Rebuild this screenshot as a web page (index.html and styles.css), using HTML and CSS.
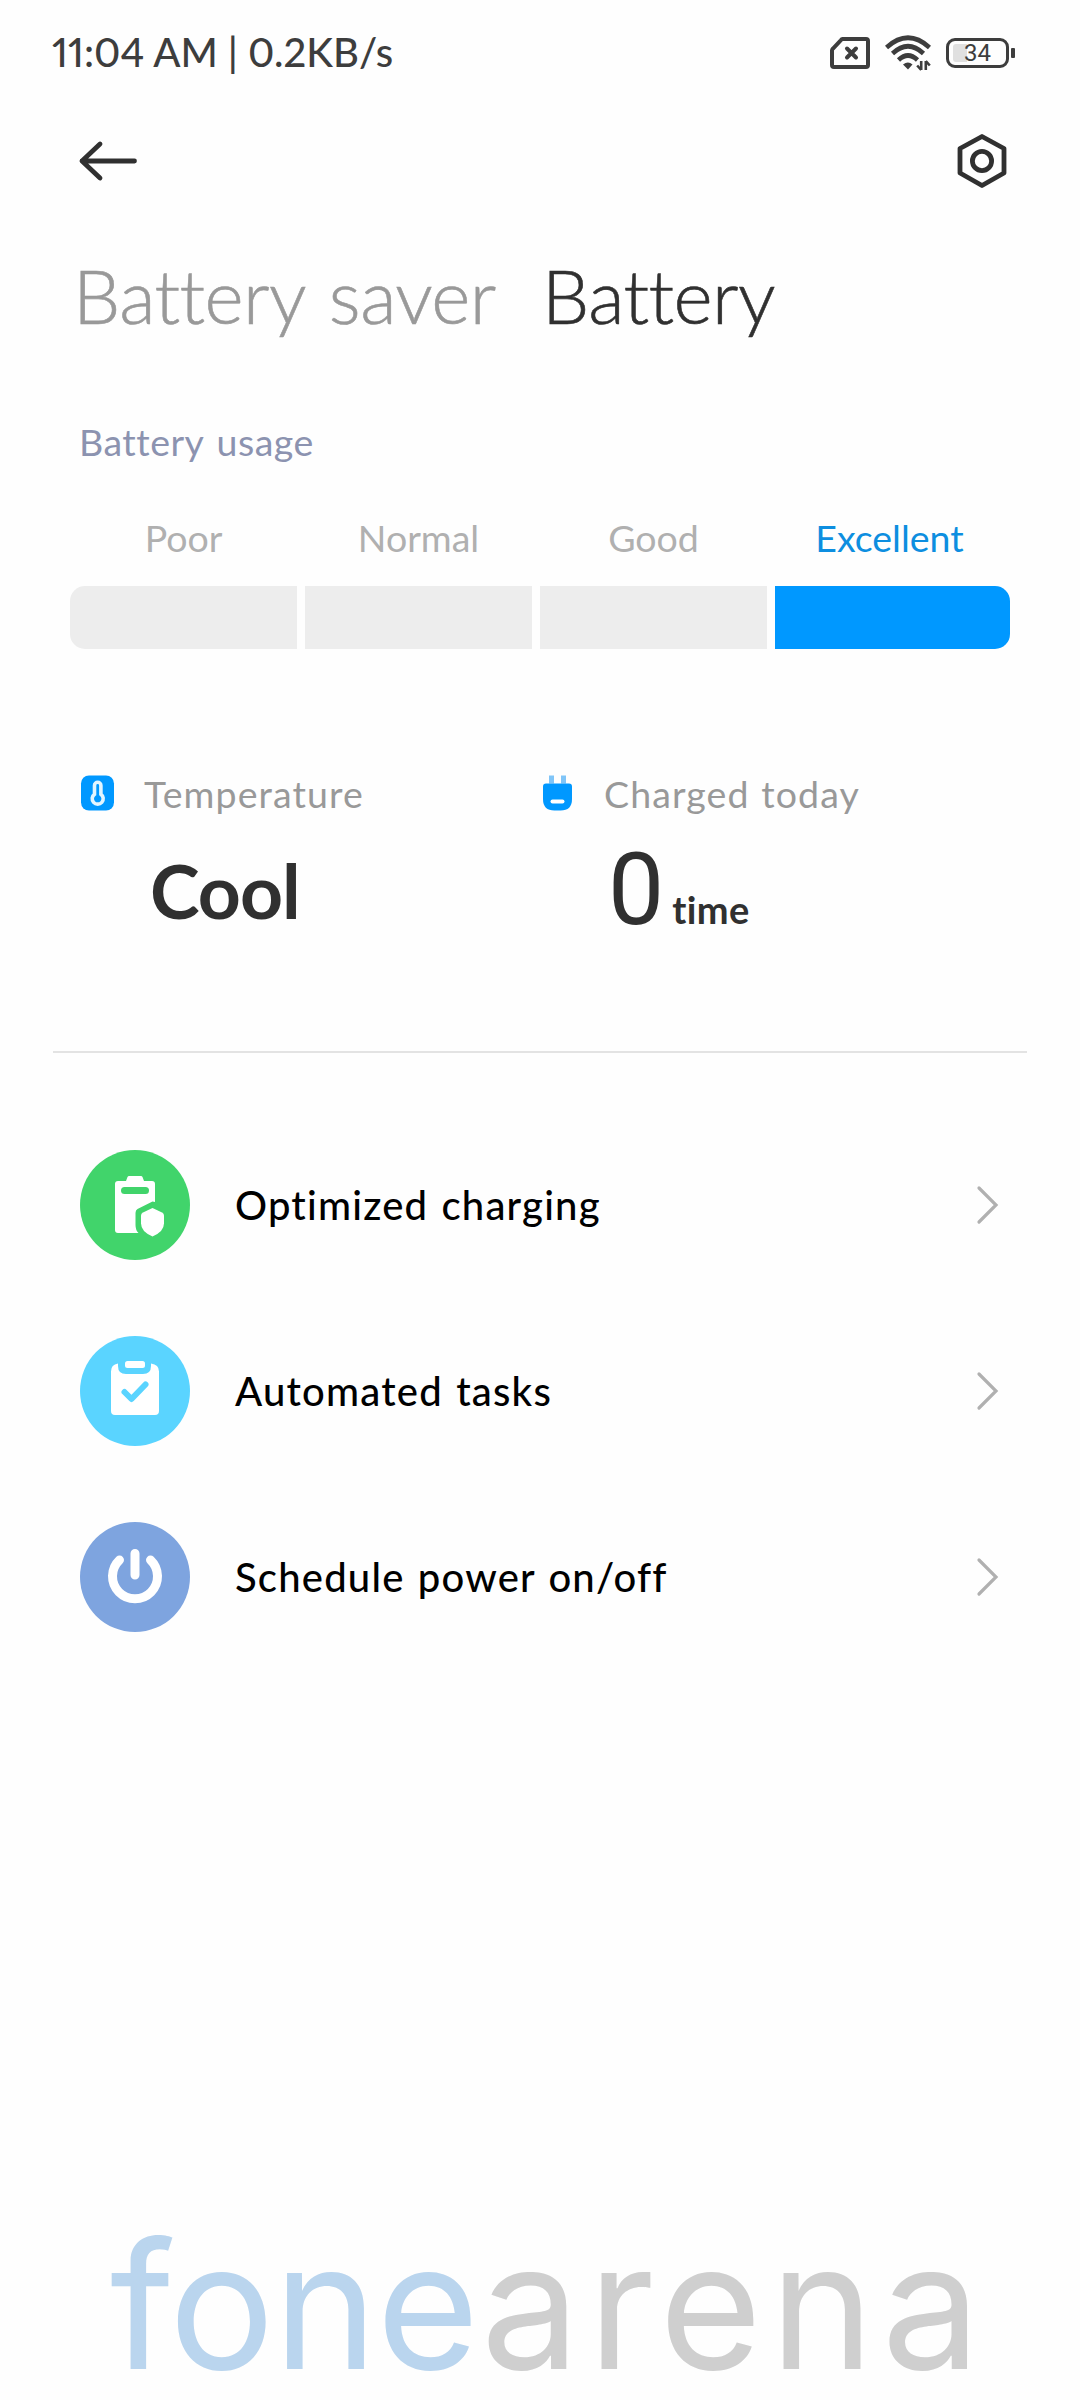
FILE: index.html
```html
<!DOCTYPE html>
<html lang="en">
  <head>
    <meta charset="UTF-8" />
    <meta name="viewport" content="width=device-width, initial-scale=1.0" />
    <title>Battery</title>
    <link rel="stylesheet" href="styles.css">
  </head>
  <body>
    <div class="statusbar">
      <div class="clock">11:04 AM | 0.2KB/s</div>
      <div class="status-icons">
        <svg class="sim" width="40" height="32" viewBox="0 0 40 32">
          <path d="M12.5 2H36q2 0 2 2v24q0 2-2 2H4q-2 0-2-2V13.500q0-1 1-2L11 3q.6-1 1.500-1z" fill="none" stroke="#3d3d3d" stroke-width="4" />
          <path d="M17 11.500l9 9M26 11.500l-9 9" stroke="#3d3d3d" stroke-width="4" stroke-linecap="round" />
        </svg>
        <svg class="wifi" width="46" height="36" viewBox="0 0 46 36">
          <g fill="none" stroke="#3d3d3d" stroke-width="4.600">
            <path d="M1.500 12.500Q23-7 44.500 12.500" />
            <path d="M7.500 18.500Q23 4 38.500 18.500" />
            <path d="M13.500 25Q23 16 32.500 25" />
          </g>
          <path d="M18 29.500q5-4 9.500 0L23 34.500z" fill="#3d3d3d" />
          <path d="M36.200 26v9M36.200 35l-4-4.500M40.800 35v-9M40.800 26l4 4.500" fill="none" stroke="#3d3d3d" stroke-width="2.600" />
        </svg>
        <div class="battery">
          <span class="battery-level"></span>
          <span class="battery-num">34</span>
        </div>
        <span class="battery-tip"></span>
      </div>
    </div>

    <header>
      <svg width="62" height="42" viewBox="0 0 62 42">
        <path d="M58.500 21H6M24 4L6 21l18 17" fill="none" stroke="#303030" stroke-width="4.800" stroke-linecap="round" stroke-linejoin="round" />
      </svg>
      <svg width="52" height="56" viewBox="0 0 52 56">
        <path d="M26 3.500L48 15.500V40L26 52.500 4 40V15.500z" fill="none" stroke="#303030" stroke-width="4.800" stroke-linejoin="round" />
        <circle cx="26" cy="28" r="9.600" fill="none" stroke="#303030" stroke-width="4.800" />
      </svg>
    </header>

    <div class="tabs">
      <div class="tab tab-saver">Battery saver</div>
      <div class="tab active">Battery</div>
    </div>

    <div class="section-title">Battery usage</div>

    <div class="usage">
      <div class="usage-label">Poor</div>
      <div class="usage-label">Normal</div>
      <div class="usage-label">Good</div>
      <div class="usage-label current">Excellent</div>
      <div class="bar"></div>
      <div class="bar"></div>
      <div class="bar"></div>
      <div class="bar current"></div>
    </div>

    <div class="stats">
      <div class="stat">
        <svg width="36" height="36" viewBox="0 0 36 36">
          <rect x="1" y="0.500" width="33" height="35" rx="8" fill="#0098ff" />
          <path d="M14.500 10.500a3.200 3.200 0 0 1 6.400 0v8.700a5.500 5.500 0 1 1-6.400 0z" fill="none" stroke="#e2f5ff" stroke-width="3.600" />
        </svg>
        <div>
          <div class="stat-label">Temperature</div>
          <div class="stat-value"><span class="cool">Cool</span></div>
        </div>
      </div>
      <div class="stat">
        <svg width="36" height="36" viewBox="0 0 36 36">
          <path d="M9 0.500h5v8H9zM21 0.500h5v8h-5z" fill="#80c5f8" />
          <path d="M6 8.500h23q3 0 3 3V24q0 11.500-11.500 11.500h-6Q3 35.500 3 24V11.500q0-3 3-3z" fill="#0098ff" />
          <path d="M12.500 26.500h10" stroke="#fff" stroke-width="4" stroke-linecap="round" />
        </svg>
        <div>
          <div class="stat-label">Charged today</div>
          <div class="stat-value"><span class="count">0</span><span class="unit">time</span></div>
        </div>
      </div>
    </div>

    <div class="divider"></div>

    <ul class="menu">
      <li>
        <svg class="menu-icon" width="110" height="110" viewBox="0 0 110 110">
          <circle cx="55" cy="55" r="55" fill="#41d46b" />
          <path d="M38 31h8l1.500-4q.5-1 1.500-1h12q1 0 1.500 1l1.500 4h8q3 0 3 3v18l-2.500-.5L57.500 59q-2 1-2 4v12q0 5 3 8H38q-3 0-3-3V34q0-3 3-3z" fill="#fff" />
          <rect x="41" y="37" width="28" height="7" rx="3.500" fill="#41d46b" />
          <path d="M72.500 58l9.500 4.500q2 1 2 3v8q0 8-11.500 13Q61 81.500 61 73.500v-8q0-2 2-3z" fill="#fff" />
        </svg>
        <span class="menu-text">Optimized charging</span>
        <svg class="chevron" width="24" height="40" viewBox="0 0 24 40">
          <path d="M3 3l17 17L3 37" />
        </svg>
      </li>
      <li>
        <svg class="menu-icon" width="110" height="110" viewBox="0 0 110 110">
          <circle cx="55" cy="55" r="55" fill="#5ad4ff" />
          <path d="M38 27.500V30q0 8 8 8h17q8 0 8-8v-2.500q8 1 8 8V75q0 4-4 4H35q-4 0-4-4V35.500q0-7 7-8z" fill="#fff" />
          <rect x="45" y="25" width="20" height="7" rx="2.500" fill="#fff" />
          <path d="M44.500 56l7 7 14-14.500" fill="none" stroke="#5ad4ff" stroke-width="6" stroke-linecap="round" stroke-linejoin="round" />
        </svg>
        <span class="menu-text">Automated tasks</span>
        <svg class="chevron" width="24" height="40" viewBox="0 0 24 40">
          <path d="M3 3l17 17L3 37" />
        </svg>
      </li>
      <li>
        <svg class="menu-icon" width="110" height="110" viewBox="0 0 110 110">
          <circle cx="55" cy="55" r="55" fill="#7ea4df" />
          <path d="M39.500 38a22.500 22.500 0 1 0 31 0M55 31.500v21.500" fill="none" stroke="#fff" stroke-width="9" stroke-linecap="round" />
        </svg>
        <span class="menu-text">Schedule power on/off</span>
        <svg class="chevron" width="24" height="40" viewBox="0 0 24 40">
          <path d="M3 3l17 17L3 37" />
        </svg>
      </li>
    </ul>

    <footer><span class="fone">fone</span><span class="arena">arena</span></footer>
  </body>
</html>
```
FILE: styles.css
```css
* {
  box-sizing: border-box;
}

body {
  margin: 0;
  width: 1080px;
  height: 2400px;
  display: flex;
  flex-direction: column;
  background: #fefefe;
  color: #303030;
  font-family: Lato, "Noto Sans", sans-serif;
  font-variant-ligatures: none;
  overflow: hidden;
}

svg {
  display: block;
  flex-shrink: 0;
}

/* ========== Status bar ========== */
.statusbar {
  display: flex;
  justify-content: space-between;
  align-items: center;
  height: 101px;
  padding: 0 65px 0 52px;
  color: #3d3d3d;
}

.clock {
  padding-top: 2px;
  font-size: 40px;
  font-weight: 500;
  font-variant-numeric: proportional-nums;
  white-space: pre;
}

.status-icons {
  display: flex;
  align-items: center;
  margin-top: 4px;
}

.wifi {
  margin: 0 15px;
}

.battery {
  display: flex;
  align-items: center;
  width: 63px;
  height: 30px;
  padding-left: 4px;
  border: 3px solid #3d3d3d;
  border-radius: 9px;
}

.battery-level {
  width: 14px;
  height: 18px;
  border-radius: 3px 0 0 3px;
  background: #e0e0e0;
}

.battery-num {
  margin-left: -3px;
  font-family: Roboto, sans-serif;
  font-size: 24px;
  line-height: 24px;
}

.battery-tip {
  width: 4px;
  height: 10px;
  margin-left: 2px;
  border-radius: 1px;
  background: #3d3d3d;
}

/* ========== Header ========== */
header {
  display: flex;
  justify-content: space-between;
  align-items: center;
  height: 119px;
  padding: 0 72px 0 76px;
}

.tabs {
  display: flex;
  align-items: center;
  height: 148px;
  padding: 2px 0 0 73px;
}

.tab {
  font-size: 75px;
  font-weight: 300;
  letter-spacing: -0.6px;
  word-spacing: 5px;
  color: #999;
  white-space: nowrap;
  -webkit-text-stroke: 0.6px;
}

.tab-saver {
  width: 469px;
}

.tab.active {
  color: #303030;
}

/* ========== Usage ========== */
.section-title {
  height: 147px;
  padding-left: 79px;
  font-size: 37.5px;
  line-height: 148px;
  letter-spacing: 0.5px;
  word-spacing: 3px;
  color: #8c93b0;
}

.usage {
  display: grid;
  grid-template-columns: 227px 227px 227px 235px;
  grid-template-rows: 45px 63px;
  gap: 26px 8px;
  padding-left: 70px;
}

.usage-label {
  font-size: 37.5px;
  line-height: 45px;
  text-align: center;
  color: #b0b0b0;
}

.usage-label.current {
  padding-right: 6px;
  color: #0d8ee0;
}

.bar {
  background: #ededed;
}

.bar:nth-child(5) {
  border-radius: 15px 0 0 15px;
}

.bar.current {
  background: #0098ff;
  border-radius: 0 15px 15px 0;
}

/* ========== Stats ========== */
.stats {
  display: grid;
  grid-template-columns: 460px 460px;
  padding: 120px 0 0 80px;
}

.stat {
  display: flex;
  gap: 28px;
}

.stat svg {
  margin-top: 6px;
}

.stat-label {
  font-size: 37.5px;
  line-height: 49px;
  letter-spacing: 1.1px;
  word-spacing: 1px;
  color: #999;
}

.stat-value {
  display: flex;
  align-items: baseline;
  height: 100px;
  margin-top: 22px;
  line-height: 100px;
}

.cool {
  margin-left: 6px;
  font-size: 75px;
  font-weight: 700;
  letter-spacing: -1px;
}

.count {
  margin-left: 4px;
  font-family: Roboto, sans-serif;
  font-size: 100px;
}

.unit {
  margin-left: 8px;
  font-size: 38px;
  font-weight: 700;
  letter-spacing: 0.4px;
}

.divider {
  height: 2px;
  margin: 111px 53px 59px;
  background: #e3e3e3;
}

/* ========== Menu ========== */
.menu {
  margin: 0;
  padding: 0;
  list-style: none;
}

.menu li {
  display: flex;
  align-items: center;
  height: 186px;
  padding: 0 80px;
}

.menu-text {
  flex: 1;
  margin-left: 45px;
  font-size: 40px;
  font-weight: 500;
  letter-spacing: 1.2px;
  word-spacing: 2px;
  color: #000;
}

.chevron path {
  fill: none;
  stroke: #b0b0b0;
  stroke-width: 3.2;
  stroke-linecap: round;
}

/* ========== Footer ========== */
footer {
  display: flex;
  height: 188px;
  margin-top: auto;
  padding-left: 110px;
  font-family: Inter, sans-serif;
  font-size: 176px;
  line-height: 186px;
}

.fone {
  letter-spacing: -1px;
  color: #bad5ee;
}

.arena {
  margin-left: 3px;
  letter-spacing: 8px;
  color: #cfcfcf;
}
```
